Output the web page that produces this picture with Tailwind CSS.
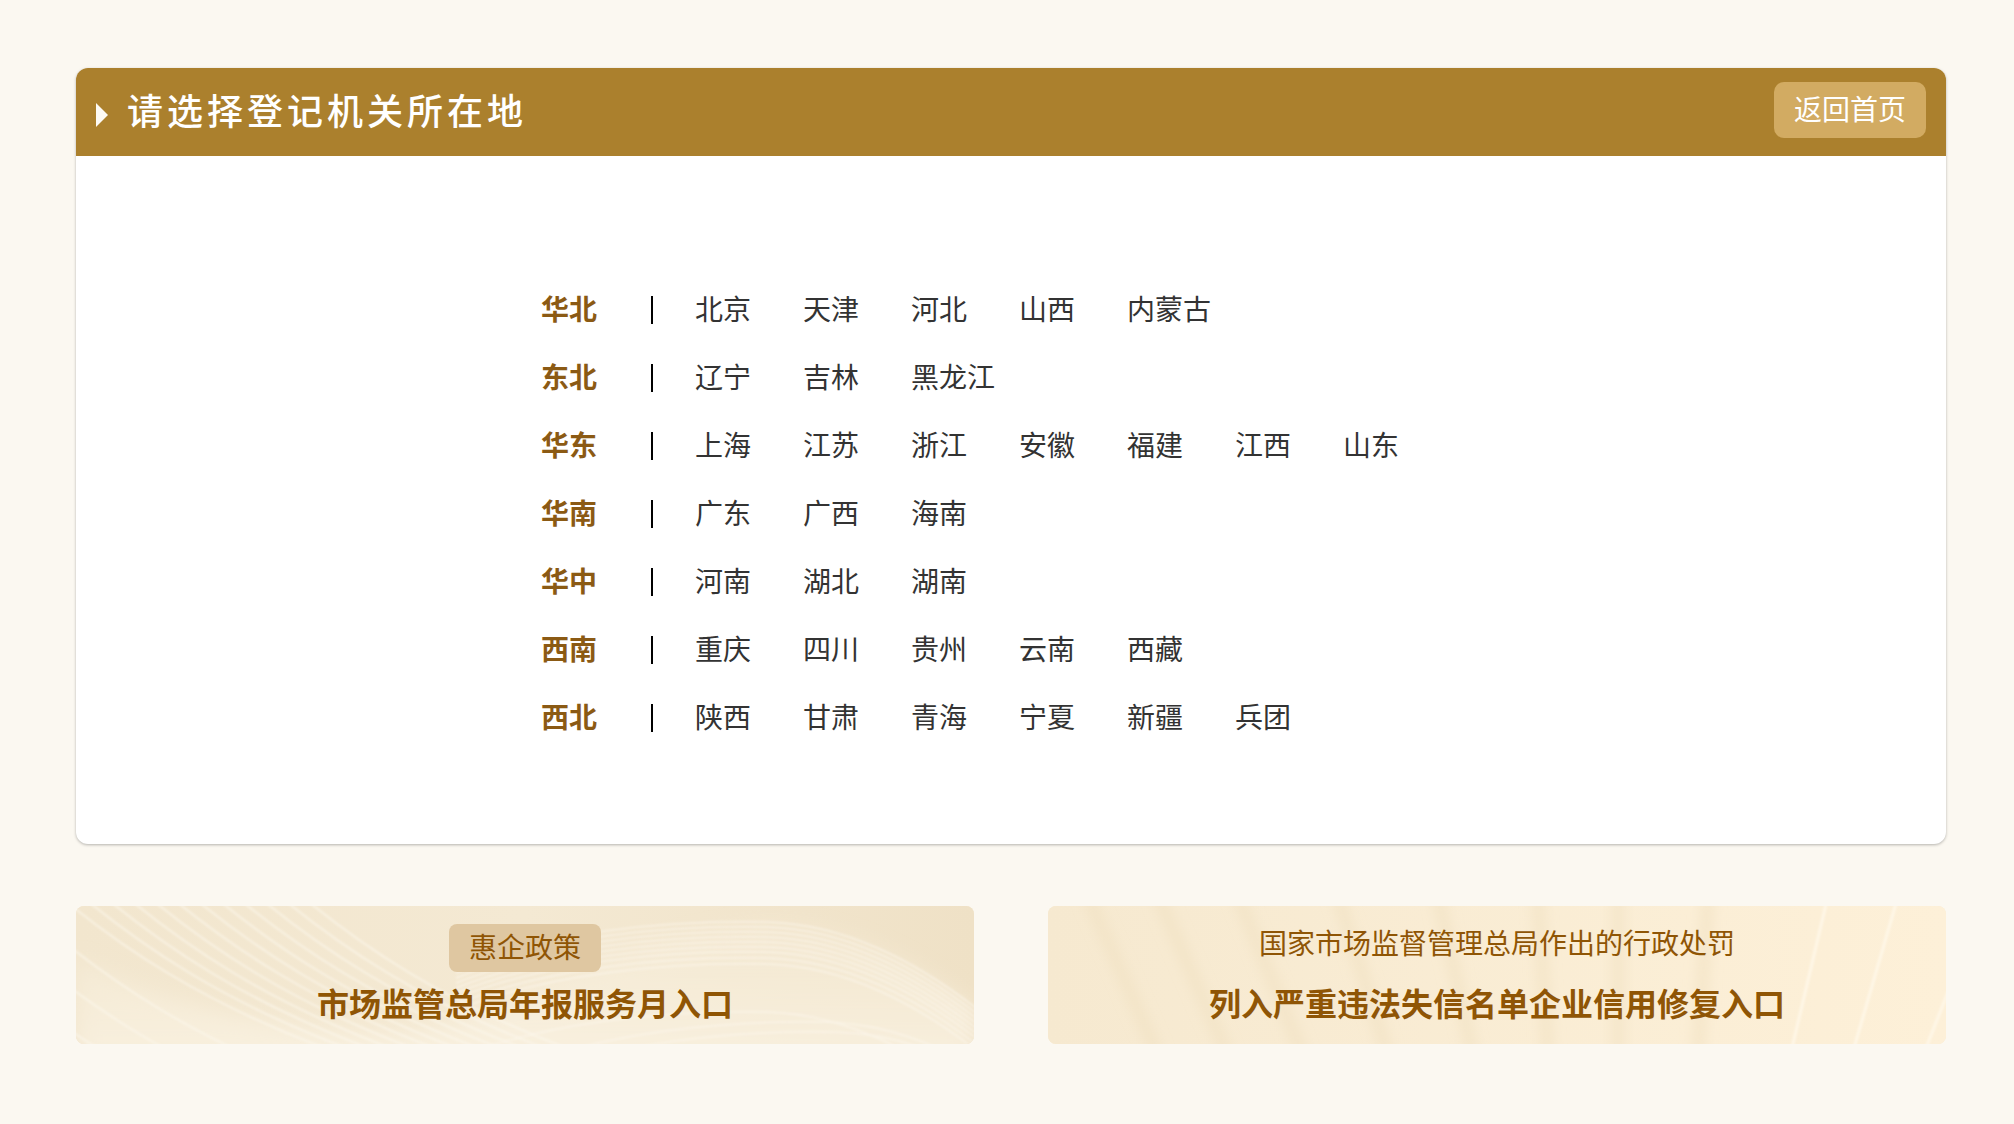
<!DOCTYPE html>
<html lang="zh-CN">
<head>
    <meta charset="UTF-8">
    <title>请选择登记机关所在地</title>
    <script src="https://cdn.jsdelivr.net/npm/@tailwindcss/browser@4"></script>
</head>
<body class="bg-[#fbf8f1] font-['Noto_Sans_CJK_SC',sans-serif]">
    <main class="w-[2014px] h-[1124px] pl-[76px] pr-[68px] pt-[68px] overflow-hidden">
        <!-- Region card -->
        <section class="h-[776px] bg-white rounded-[12px] shadow-[0_1px_3px_rgba(0,0,0,0.28)] overflow-hidden">
            <header class="h-[88px] bg-[#ab802d] flex items-center pl-[20px] pr-[20px]">
                <span class="w-0 h-0 mt-[5px] border-y-[12px] border-y-transparent border-l-[12px] border-l-[#fdfaf4]"></span>
                <h1 class="ml-[19px] -mt-[7px] text-[36px] leading-[48px] tracking-[4px] text-white font-medium">请选择登记机关所在地</h1>
                <button class="ml-auto mb-[4px] w-[152px] h-[56px] pb-[4px] rounded-[10px] bg-[#d2ab62] text-white text-[28px] leading-[50px] text-center">返回首页</button>
            </header>

            <div class="pt-[118px] pl-[465px] text-[28px] text-[#333]">
                <div class="flex items-center h-[68px]">
                    <b class="w-[56px] font-bold text-[#8b5a14]">华北</b><i class="w-[2px] h-[28px] mt-[4px] bg-black ml-[54px] mr-[42px]"></i>
                    <a class="w-[108px]">北京</a><a class="w-[108px]">天津</a><a class="w-[108px]">河北</a><a class="w-[108px]">山西</a><a class="w-[108px]">内蒙古</a>
                </div>
                <div class="flex items-center h-[68px]">
                    <b class="w-[56px] font-bold text-[#8b5a14]">东北</b><i class="w-[2px] h-[28px] mt-[4px] bg-black ml-[54px] mr-[42px]"></i>
                    <a class="w-[108px]">辽宁</a><a class="w-[108px]">吉林</a><a class="w-[108px]">黑龙江</a>
                </div>
                <div class="flex items-center h-[68px]">
                    <b class="w-[56px] font-bold text-[#8b5a14]">华东</b><i class="w-[2px] h-[28px] mt-[4px] bg-black ml-[54px] mr-[42px]"></i>
                    <a class="w-[108px]">上海</a><a class="w-[108px]">江苏</a><a class="w-[108px]">浙江</a><a class="w-[108px]">安徽</a><a class="w-[108px]">福建</a><a class="w-[108px]">江西</a><a class="w-[108px]">山东</a>
                </div>
                <div class="flex items-center h-[68px]">
                    <b class="w-[56px] font-bold text-[#8b5a14]">华南</b><i class="w-[2px] h-[28px] mt-[4px] bg-black ml-[54px] mr-[42px]"></i>
                    <a class="w-[108px]">广东</a><a class="w-[108px]">广西</a><a class="w-[108px]">海南</a>
                </div>
                <div class="flex items-center h-[68px]">
                    <b class="w-[56px] font-bold text-[#8b5a14]">华中</b><i class="w-[2px] h-[28px] mt-[4px] bg-black ml-[54px] mr-[42px]"></i>
                    <a class="w-[108px]">河南</a><a class="w-[108px]">湖北</a><a class="w-[108px]">湖南</a>
                </div>
                <div class="flex items-center h-[68px]">
                    <b class="w-[56px] font-bold text-[#8b5a14]">西南</b><i class="w-[2px] h-[28px] mt-[4px] bg-black ml-[54px] mr-[42px]"></i>
                    <a class="w-[108px]">重庆</a><a class="w-[108px]">四川</a><a class="w-[108px]">贵州</a><a class="w-[108px]">云南</a><a class="w-[108px]">西藏</a>
                </div>
                <div class="flex items-center h-[68px]">
                    <b class="w-[56px] font-bold text-[#8b5a14]">西北</b><i class="w-[2px] h-[28px] mt-[4px] bg-black ml-[54px] mr-[42px]"></i>
                    <a class="w-[108px]">陕西</a><a class="w-[108px]">甘肃</a><a class="w-[108px]">青海</a><a class="w-[108px]">宁夏</a><a class="w-[108px]">新疆</a><a class="w-[108px]">兵团</a>
                </div>
            </div>
        </section>

        <!-- Entry banners -->
        <div class="flex justify-between mt-[62px]">
            <a class="relative w-[898px] h-[138px] rounded-[8px] overflow-hidden flex flex-col items-center text-[#8f5505] bg-[#f3e7d0]">
                <svg class="absolute inset-0" width="898" height="138" viewBox="0 0 898 138" fill="none">
                    <defs>
                        <linearGradient id="lbg" x1="0" y1="0" x2="1" y2="0">
                            <stop offset="0" stop-color="#f2e6ce"/>
                            <stop offset="0.5" stop-color="#f4e9d3"/>
                            <stop offset="1" stop-color="#efe1c6"/>
                        </linearGradient>
                        <linearGradient id="lglow" x1="0" y1="0" x2="0" y2="1">
                            <stop offset="0" stop-color="#f9f1e0" stop-opacity="0.2"/>
                            <stop offset="1" stop-color="#f9f1e0" stop-opacity="0.9"/>
                        </linearGradient>
                        <filter id="glow"><feGaussianBlur stdDeviation="10"/></filter>
                        <filter id="blur2"><feGaussianBlur stdDeviation="0.8"/></filter>
                        <path id="arc" d="M-40 -30C40 40 130 100 270 150"/>
                        <path id="hump" d="M380 62C470 26 590 14 690 16C770 18 840 56 900 102"/>
                    </defs>
                    <rect width="898" height="138" fill="url(#lbg)"/>
                    <path d="M0 52C90 100 200 122 300 126C420 130 470 50 690 16C770 18 840 56 898 102V158H0Z" fill="url(#lglow)" filter="url(#glow)"/>
                    <g stroke="#fcf7ec" stroke-opacity="0.65" stroke-width="2" filter="url(#blur2)">
                        <use href="#arc"/><use href="#arc" x="22"/><use href="#arc" x="44"/><use href="#arc" x="66"/>
                        <use href="#arc" x="88"/><use href="#arc" x="110"/><use href="#arc" x="132"/><use href="#arc" x="154"/>
                        <use href="#arc" x="176"/><use href="#arc" x="198"/><use href="#arc" x="220"/><use href="#arc" x="242"/>
                        <use href="#arc" x="-8" y="36"/><use href="#arc" x="-30" y="60"/><use href="#arc" x="-56" y="84"/>
                    </g>
                    <g stroke="#fcf7ec" stroke-opacity="0.7" stroke-width="1.5" filter="url(#blur2)">
                        <use href="#hump"/><use href="#hump" y="5"/><use href="#hump" y="10"/><use href="#hump" y="15"/>
                        <use href="#hump" y="20"/><use href="#hump" y="25"/><use href="#hump" y="30"/><use href="#hump" y="36"/>
                        <use href="#hump" y="42"/><use href="#hump" y="90"/><use href="#hump" x="60" y="100"/><use href="#hump" x="70" y="110"/>
                    </g>
                </svg>
                <span class="relative mt-[18px] w-[152px] h-[48px] rounded-[8px] bg-[#dfc7a1] text-[28px] leading-[45px] text-center">惠企政策</span>
                <strong class="relative mt-[8px] text-[32px] leading-[44px] font-bold">市场监管总局年报服务月入口</strong>
            </a>

            <a class="relative w-[898px] h-[138px] rounded-[8px] overflow-hidden flex flex-col items-center text-[#8f5505] bg-[#f8ebd3]">
                <svg class="absolute inset-0" width="898" height="138" viewBox="0 0 898 138" fill="none">
                    <defs>
                        <linearGradient id="rbg" x1="0" y1="0" x2="1" y2="0">
                            <stop offset="0" stop-color="#f6e9d0"/>
                            <stop offset="1" stop-color="#fdf0d8"/>
                        </linearGradient>
                        <filter id="soft"><feGaussianBlur stdDeviation="6"/></filter>
                        <filter id="soft2"><feGaussianBlur stdDeviation="1"/></filter>
                    </defs>
                    <rect width="898" height="138" fill="url(#rbg)"/>
                    <g stroke="#efdfc0" stroke-opacity="0.5" stroke-width="14" filter="url(#soft)">
                        <path d="M40 -10L110 150"/><path d="M110 -10L180 150"/><path d="M190 -10L255 150"/>
                        <path d="M290 -10L340 150"/><path d="M390 -10L425 150"/><path d="M490 -10L500 150"/>
                        <path d="M570 -10L570 150"/><path d="M660 -10L650 150"/>
                    </g>
                    <g stroke="#fff8ea" stroke-width="3" stroke-opacity="0.85" filter="url(#soft2)">
                        <path d="M779 -6L744 142"/><path d="M849 -6L806 142"/><path d="M900 86L878 142"/>
                    </g>
                </svg>
                <span class="relative mt-[16px] text-[28px] leading-[40px]">国家市场监督管理总局作出的行政处罚</span>
                <strong class="relative mt-[18px] text-[32px] leading-[44px] font-bold">列入严重违法失信名单企业信用修复入口</strong>
            </a>
        </div>
    </main>
</body>
</html>
